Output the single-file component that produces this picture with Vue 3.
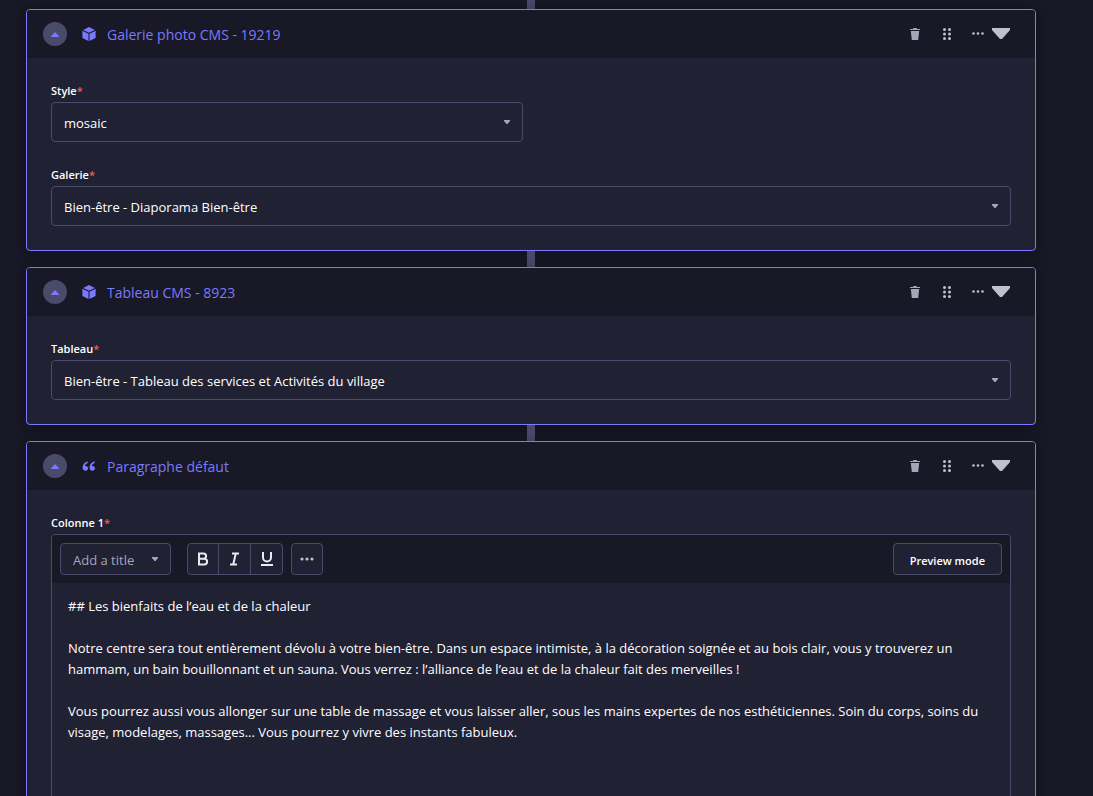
<script setup>
import { ref } from 'vue'

const sections = ref([
  {
    id: 'galerie',
    icon: 'cube',
    title: 'Galerie photo CMS - 19219',
    fields: [
      { id: 'style', label: 'Style', value: 'mosaic', half: true },
      { id: 'galerie-ref', label: 'Galerie', value: 'Bien-être - Diaporama Bien-être' },
    ],
  },
  {
    id: 'tableau',
    icon: 'cube',
    title: 'Tableau CMS - 8923',
    fields: [
      { id: 'tableau-ref', label: 'Tableau', value: 'Bien-être - Tableau des services et Activités du village' },
    ],
  },
  { id: 'paragraphe', icon: 'quote', title: 'Paragraphe défaut', fields: [], editor: true },
])

const content = ref(
  [
    '## Les bienfaits de l’eau et de la chaleur',
    '',
    'Notre centre sera tout entièrement dévolu à votre bien-être. Dans un espace intimiste, à la décoration soignée et au bois clair, vous y trouverez un hammam, un bain bouillonnant et un sauna. Vous verrez : l’alliance de l’eau et de la chaleur fait des merveilles !',
    '',
    'Vous pourrez aussi vous allonger sur une table de massage et vous laisser aller, sous les mains expertes de nos esthéticiennes. Soin du corps, soins du visage, modelages, massages... Vous pourrez y vivre des instants fabuleux.',
  ].join('\n'),
)
</script>

<template>
  <main class="page">
    <template v-for="section in sections" :key="section.id">
      <div class="connector"></div>
      <section class="card">
        <header class="card-header">
          <button class="toggle" type="button" :aria-label="'Replier ' + section.title">
            <svg width="8" height="5" viewBox="0 0 8 5"><path d="M4 0l4 4.2V5H0v-.8z" /></svg>
          </button>
          <svg v-if="section.icon === 'cube'" class="kind" width="14" height="14" viewBox="0 0 14 14">
            <path d="M7 0l5.800 2.900L7 5.800 1.200 2.900z" />
            <path d="M.4 3.800l6.100 3v7.200L.4 11z" />
            <path d="M13.600 3.800l-6.100 3v7.200l6.100-3z" />
          </svg>
          <svg v-else class="kind" width="14" height="14" viewBox="0 0 14 14">
            <path d="M5.600 2.200C3 3.100.6 5.400.6 8.500c0 2 1.100 3.300 2.900 3.300 1.500 0 2.600-1.100 2.600-2.500 0-1.400-1-2.400-2.300-2.400-.4 0-.7 0-.9.1.3-1.300 1.300-2.300 2.900-3z" />
            <path d="M12.500 2.200c-2.600.9-5 3.200-5 6.300 0 2 1.100 3.300 2.900 3.300 1.500 0 2.600-1.100 2.600-2.500 0-1.400-1-2.400-2.300-2.400-.4 0-.7 0-.9.1.3-1.300 1.300-2.300 2.900-3z" />
          </svg>
          <h2 class="title">{{ section.title }}</h2>
          <div class="actions">
            <button class="action" type="button" aria-label="Supprimer">
              <svg width="10" height="12" viewBox="0 0 10 12">
                <path d="M0 1h3.200V0h3.600v1H10v1H0z" /><path d="M.8 3h8.400l-1 9H1.800z" />
              </svg>
            </button>
            <button class="action light" type="button" aria-label="Déplacer">
              <svg width="8" height="12" viewBox="0 0 8 12">
                <circle cx="1.500" cy="1.500" r="1.500" /><circle cx="6.500" cy="1.500" r="1.500" />
                <circle cx="1.500" cy="6" r="1.500" /><circle cx="6.500" cy="6" r="1.500" />
                <circle cx="1.500" cy="10.500" r="1.500" /><circle cx="6.500" cy="10.500" r="1.500" />
              </svg>
            </button>
            <button class="action menu light" type="button" aria-label="Plus d’actions">
              <svg width="12" height="4" viewBox="0 0 12 4">
                <circle cx="1.500" cy="1.500" r="1.300" /><circle cx="6" cy="1.500" r="1.300" /><circle cx="10.500" cy="1.500" r="1.300" />
              </svg>
              <svg width="18" height="12" viewBox="0 0 18 12"><path d="M0 0h18v2L10 11H8L0 2z" /></svg>
            </button>
          </div>
        </header>

        <div class="card-body">
          <div v-for="field in section.fields" :key="field.id" class="field" :class="{ half: field.half }">
            <label class="label" :for="field.id">{{ field.label }}<span class="required">*</span></label>
            <div class="select-box">
              <select :id="field.id" v-model="field.value" class="select">
                <option>{{ field.value }}</option>
              </select>
              <svg class="caret" width="6" height="4" viewBox="0 0 6 4"><path d="M0 0h6v1L3.500 4h-1L0 1z" /></svg>
            </div>
          </div>

          <div v-if="section.editor" class="field">
            <label class="label" for="colonne">Colonne 1<span class="required">*</span></label>
            <div class="editor">
              <div class="toolbar">
                <div class="select-box">
                  <select class="select small" aria-label="Add a title">
                    <option>Add a title</option>
                  </select>
                  <svg class="caret" width="6" height="4" viewBox="0 0 6 4"><path d="M0 0h6v1L3.500 4h-1L0 1z" /></svg>
                </div>
                <div class="group">
                  <button class="tool" type="button" aria-label="Bold">
                    <svg width="12" height="14" viewBox="0 0 12 14" class="stroke">
                      <path d="M2 1.500h4.500a2.600 2.600 0 010 5.200H2zM2 6.700h5.200a2.900 2.900 0 010 5.800H2z" />
                    </svg>
                  </button>
                  <button class="tool" type="button" aria-label="Italic">
                    <svg width="12" height="14" viewBox="0 0 12 14" class="stroke">
                      <path d="M3 1.500h7M1 12.500h7M6.800 1.500l-2.600 11" />
                    </svg>
                  </button>
                  <button class="tool" type="button" aria-label="Underline">
                    <svg width="14" height="14" viewBox="0 0 14 14" class="stroke">
                      <path d="M3 0v5.500a4 4 0 008 0V0M1 13h12" />
                    </svg>
                  </button>
                </div>
                <button class="tool single" type="button" aria-label="More">
                  <svg width="14" height="4" viewBox="0 0 14 4">
                    <circle cx="2" cy="2" r="1.600" /><circle cx="7" cy="2" r="1.600" /><circle cx="12" cy="2" r="1.600" />
                  </svg>
                </button>
                <button class="preview" type="button">Preview mode</button>
              </div>
              <textarea id="colonne" v-model="content" class="content" spellcheck="false"></textarea>
            </div>
          </div>
        </div>
      </section>
    </template>
  </main>
</template>

<style>
body {
  background: #181826;
}
</style>

<style scoped>
.page {
  box-sizing: border-box;
  height: 100vh;
  overflow: hidden;
  padding: 0 57px 0 26px;
  font-family: "Open Sans", "Noto Sans", sans-serif;
  font-size: 13px;
  color: #fff;
}
.page * {
  box-sizing: border-box;
}
button,
select,
textarea {
  font: inherit;
  color: inherit;
  margin: 0;
}
button {
  display: flex;
  align-items: center;
  justify-content: center;
  padding: 0;
  border: 0;
  background: none;
}
svg {
  display: block;
  fill: currentColor;
}
.connector {
  width: 8px;
  height: 16px;
  margin: 0 auto;
  background: #4a4a6a;
}
.connector:first-child {
  height: 9px;
}
.card {
  border: 1px solid #7b79ff;
  border-radius: 4px;
  background: #212134;
  box-shadow: 0 2px 15px rgba(3, 3, 5, 0.3);
  overflow: hidden;
}
.card-header {
  display: flex;
  align-items: center;
  height: 48px;
  padding: 0 25px 0 16px;
  background: #181826;
  color: #7b79ff;
}
.toggle {
  width: 24px;
  height: 24px;
  border-radius: 50%;
  background: #4a4a6a;
}
.kind {
  margin: 0 11px 0 15px;
}
.title {
  flex: 1;
  margin: 0;
  padding-top: 2px;
  font-size: 14px;
  font-weight: 500;
  line-height: 20px;
}
.actions {
  display: flex;
  align-items: center;
  color: #a5a5ba;
}
.action {
  width: 32px;
  height: 32px;
}
.light {
  color: #c0c0cf;
}
.menu {
  width: auto;
  gap: 8px;
  padding-left: 9px;
}
.card-body {
  display: grid;
  grid-template-columns: 1fr 1fr;
  gap: 24px 16px;
  padding: 24px;
}
.field {
  grid-column: 1 / -1;
  display: flex;
  flex-direction: column;
  gap: 2px;
}
.field.half {
  grid-column: 1;
}
.label {
  font-size: 11px;
  font-weight: 600;
  line-height: 18px;
}
.required {
  color: #ee5e52;
}
.select-box {
  display: grid;
  align-items: center;
}
.select,
.caret {
  grid-area: 1 / 1;
}
.select {
  appearance: none;
  width: 100%;
  height: 40px;
  padding: 2px 32px 0 12px;
  border: 1px solid #4a4a6a;
  border-radius: 4px;
  background: #212134;
}
.select.small {
  width: 111px;
  height: 32px;
  color: #a5a5ba;
}
.caret {
  justify-self: end;
  margin-right: 13px;
  color: #a5a5ba;
  pointer-events: none;
}
.editor {
  border: 1px solid #4a4a6a;
  border-radius: 4px;
  overflow: hidden;
}
.toolbar {
  display: flex;
  align-items: center;
  height: 48px;
  padding: 8px;
  background: #181826;
}
.group {
  display: flex;
  margin: 0 8px 0 16px;
  border: 1px solid #4a4a6a;
  border-radius: 4px;
  background: #212134;
}
.tool {
  width: 32px;
  height: 30px;
  color: #eaeaef;
}
.tool + .tool {
  border-left: 1px solid #4a4a6a;
}
.group .tool:first-child {
  width: 30px;
}
.tool.single {
  height: 32px;
  border: 1px solid #4a4a6a;
  border-radius: 4px;
  background: #212134;
  color: #c0c0cf;
}
.stroke {
  fill: none;
  stroke: currentColor;
  stroke-width: 2;
}
.preview {
  height: 32px;
  margin-left: auto;
  padding: 2px 16px 0;
  border: 1px solid #4a4a6a;
  border-radius: 4px;
  background: #212134;
  font-size: 11px;
  font-weight: 600;
}
.content {
  display: block;
  width: 100%;
  height: 360px;
  padding: 13px 16px;
  border: 0;
  outline: 0;
  resize: none;
  background: #212134;
  line-height: 21px;
}
</style>
